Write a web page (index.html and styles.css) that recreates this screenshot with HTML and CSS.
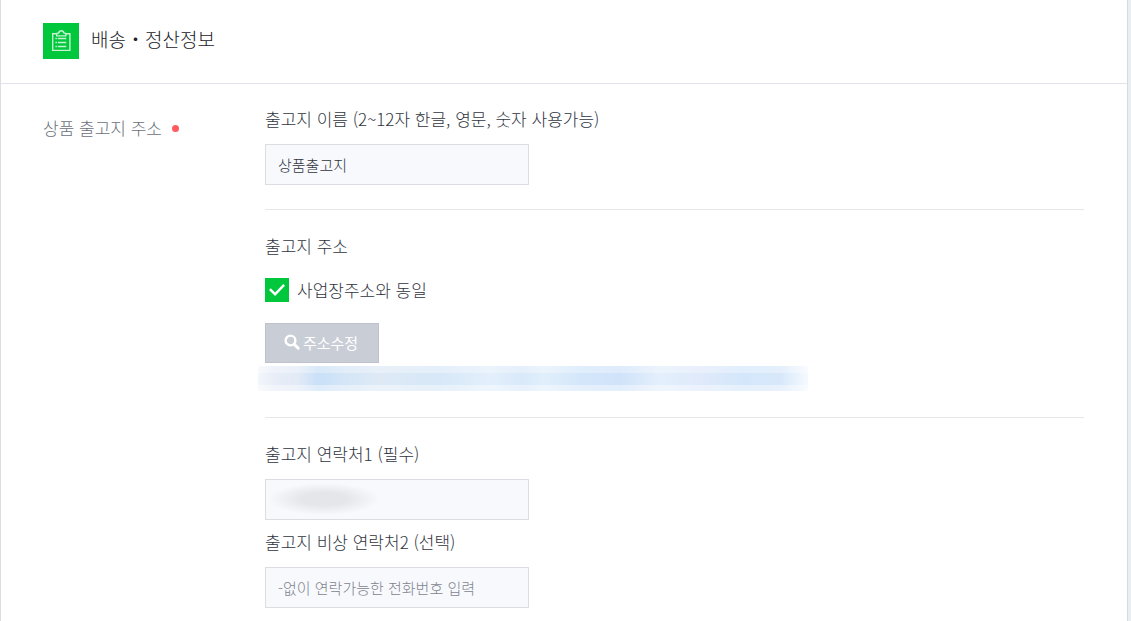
FILE: index.html
```html
<!DOCTYPE html>
<html lang="ko">
<head>
  <meta charset="UTF-8">
  <meta name="viewport" content="width=device-width, initial-scale=1.0">
  <title>배송・정산정보</title>
  <link rel="stylesheet" href="styles.css">
</head>
<body>
  <main class="panel">
    <header class="panel-header">
      <svg class="panel-icon" viewBox="0 0 36 36" aria-hidden="true">
        <rect width="36" height="36" fill="#00c73c"/>
        <g fill="none" stroke="#c4f3d1" stroke-width="1.4">
          <path d="M14 10.7H9.700v16.700h17.200V10.700h-4.300"/>
          <path d="M13.700 12.900v-2.300l2-.6c.3-1.500 1.200-2.300 2.600-2.300s2.300.8 2.600 2.300l2 .6v2.300z"/>
          <path d="M12.400 15.500h1.500M14.800 15.500h8.500M12.400 19.500h1.500M14.800 19.500h8.500M12.400 23.500h1.500M14.800 23.500h8.500"/>
        </g>
      </svg>
      <h1>배송・정산정보</h1>
    </header>

    <form class="panel-body">
      <div class="row-title">상품 출고지 주소 <span class="required"></span></div>

      <div class="fields">
        <section class="group">
          <label class="label" for="place-name">출고지 이름 (2~12자 한글, 영문, 숫자 사용가능)</label>
          <input class="text-input" id="place-name" type="text" value="상품출고지">
        </section>

        <section class="group">
          <div class="label">출고지 주소</div>
          <label class="check">
            <input type="checkbox" checked>
            <span>사업장주소와 동일</span>
          </label>
          <button class="btn-address" type="button">
            <svg viewBox="0 0 16 16" aria-hidden="true">
              <circle cx="6.500" cy="6.500" r="4.900" fill="none" stroke="#fff" stroke-width="2.400"/>
              <path d="M10.200 10.200l4 4" stroke="#fff" stroke-width="3" stroke-linecap="round"/>
            </svg>
            주소수정
          </button>
          <div class="masked-address"></div>
        </section>

        <section class="group">
          <label class="label" for="phone1">출고지 연락처1 (필수)</label>
          <input class="text-input masked" id="phone1" type="text">
          <label class="label" for="phone2">출고지 비상 연락처2 (선택)</label>
          <input class="text-input" id="phone2" type="text" placeholder="-없이 연락가능한 전화번호 입력">
        </section>
      </div>
    </form>
  </main>
</body>
</html>
```
FILE: styles.css
```css
* {
  box-sizing: border-box;
}
body {
  margin: 0;
  padding-right: 3px;
  background: #e9eef3;
  color: #30343e;
  font-family: "Noto Sans CJK KR", "Liberation Sans", sans-serif;
  font-size: 17px;
  font-weight: 300;
}
.panel {
  min-height: 100vh;
  background: #fff;
  border-left: 1px solid #dbdde2;
  border-right: 1px solid #d5dae0;
}
.panel-header {
  display: flex;
  align-items: center;
  gap: 12px;
  height: 84px;
  padding: 0 42px 2px;
  border-bottom: 1px solid #e3e4e9;
}
.panel-icon {
  width: 36px;
  height: 36px;
}
h1 {
  margin: 0;
  color: #202028;
  font-size: 19px;
  font-weight: 300;
  line-height: 28px;
  padding-bottom: 4px;
}
.panel-body {
  display: flex;
  padding: 23px 43px 0 42px;
}
.row-title {
  display: flex;
  align-items: center;
  flex: 0 0 222px;
  height: 24px;
  margin-top: 8px;
  color: #6b707a;
}
.required {
  width: 7px;
  height: 7px;
  margin: 2px 0 0 10px;
  border-radius: 50%;
  background: #ff5a5f;
}
.fields {
  flex: 1;
}
.group {
  padding-bottom: 24px;
}
.group + .group {
  padding-top: 24px;
  border-top: 1px solid #e5e6ea;
}
.label {
  display: block;
  line-height: 24px;
}
.text-input {
  display: block;
  width: 264px;
  height: 41px;
  margin: 13px 0 0;
  padding: 0 12px;
  border: 1px solid #dbdde2;
  border-radius: 0;
  background: #f8f9fd;
  color: #30343e;
  font: inherit;
  font-size: 15px;
}
.text-input::placeholder {
  color: #7f848e;
  opacity: 1;
}
.text-input + .label {
  margin-top: 10px;
}
.masked {
  background: radial-gradient(ellipse 56px 16px at 58px 19px, #e5e6e9 40%, #f8f9fd) #f8f9fd;
}
.check {
  display: flex;
  align-items: center;
  gap: 8px;
  height: 24px;
  margin-top: 20px;
}
.check span {
  padding-bottom: 2px;
}
.check input {
  appearance: none;
  width: 24px;
  height: 24px;
  margin: 0;
  background: #00c73c;
  display: grid;
  place-items: center;
}
.check input:checked::before {
  content: "";
  width: 16px;
  height: 12px;
  background: #fff;
  clip-path: polygon(0 50%, 11% 36%, 38% 70%, 89% 0, 100% 14%, 38% 100%);
}
.btn-address {
  display: flex;
  align-items: center;
  justify-content: center;
  gap: 3px;
  width: 114px;
  height: 40px;
  margin-top: 21px;
  padding: 0 2px 2px 0;
  border: 1px solid #bfc2cd;
  background: #c9cdd6;
  color: #fff;
  font: inherit;
  font-size: 15px;
  font-weight: 400;
}
.btn-address svg {
  width: 16px;
  height: 16px;
}
.masked-address {
  width: 550px;
  max-width: 100%;
  height: 25px;
  margin: 3px 0 2px -7px;
  border-radius: 3px;
  background:
    linear-gradient(rgba(255, 255, 255, 0.3) 7px, transparent 7px 19px, rgba(255, 255, 255, 0.4) 19px),
    linear-gradient(90deg, #f3f7fb, #e8edf7 3%, #e3ebf6 7%, #c9e0f7 11%, #d5e6f7 16%, #dee9f5 22%, #d7e8f8 33%, #e3effb 42%, #d9e9fa 48%, #e1effb 52%, #d3e6fa 59%, #d1e3fa 66%, #e3effb 73%, #e0eafb 80%, #d4e7fa 88%, #d8e8fa 95%, #f5faff);
}
```
